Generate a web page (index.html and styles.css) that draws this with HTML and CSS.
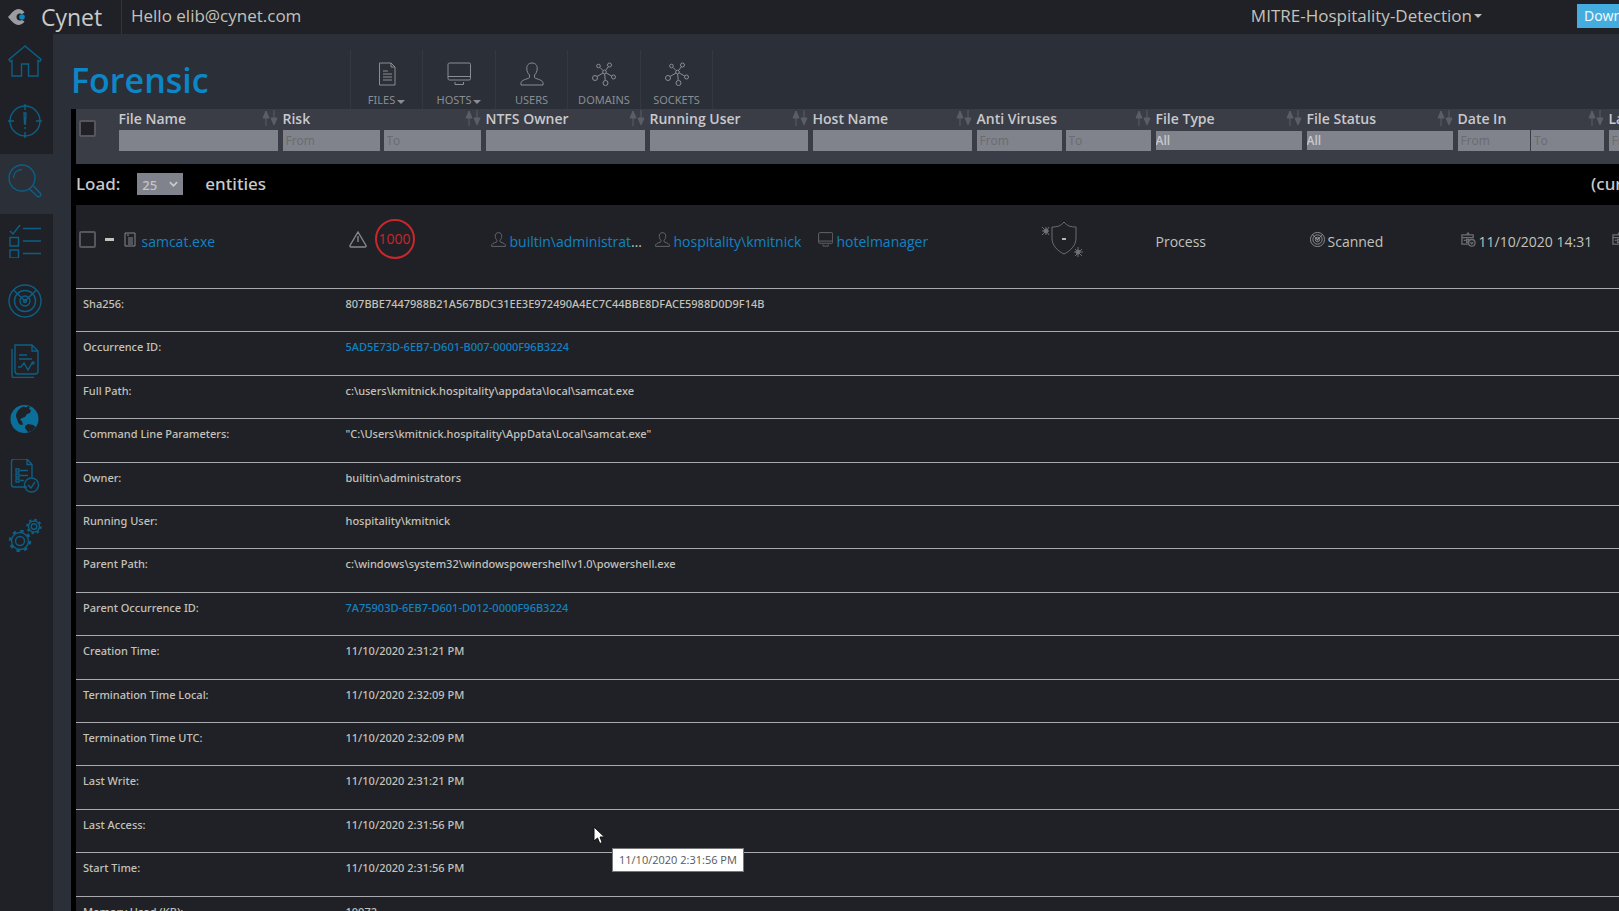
FILE: index.html
```html
<!DOCTYPE html>
<html lang="en">
<head>
<meta charset="utf-8">
<title>Cynet - Forensic</title>
<link rel="stylesheet" href="styles.css">
</head>
<body>
<svg class="defs" aria-hidden="true">
  <symbol id="i-sort" viewBox="0 0 16 16"><path d="M4 1v15M12 0v10" stroke="currentColor" fill="none"/><path d="M4 1 7 8H1zM12 15 9 8h6z" fill="currentColor"/></symbol>
  <symbol id="i-user" viewBox="0 0 24 24"><path d="M12 1C8.500 1 6.500 3.500 6.800 7c.2 2.500 1 4.500 2.700 6v2.500c-.4 1.500-7 1.500-8.500 5V23h22v-2.500c-1.500-3.500-8.100-3.500-8.500-5V13c1.700-1.500 2.500-3.500 2.700-6C17.500 3.500 15.500 1 12 1z"/></symbol>
  <symbol id="i-host" viewBox="0 0 24 24"><rect x="1" y="1" width="22.500" height="17" rx="1.500"/><path d="M1 14.500h22M8 20v2.500h8.500V20"/></symbol>
  <symbol id="i-net" viewBox="0 0 24 24"><circle cx="12.500" cy="10" r="1.800"/><circle cx="6.500" cy="4" r="1.800"/><circle cx="17.500" cy="3" r="2"/><circle cx="21.500" cy="15" r="2"/><circle cx="13.500" cy="21" r="2.500"/><circle cx="3" cy="16" r="2.500"/><path d="M11 8.500 8 5.500M13.500 8.500l3-4M14.200 11l5.500 3M12.700 12l.5 6.500M11 11l-6 3.500"/></symbol>
  <symbol id="i-radar" viewBox="0 0 34 34"><circle cx="17" cy="17" r="16"/><circle cx="17" cy="17" r="10.500"/><circle cx="17" cy="17" r="5"/><circle cx="17" cy="17" r="1.500"/><path d="M5.500 6 17 17 28.500 6"/></symbol>
  <symbol id="i-date" viewBox="0 0 16 16"><path d="M6 3 7.500 1 9 3"/><path d="M1 3h12v3H1zM1 6v7h7M3 9h2M6 8h2v3H6z" /><circle cx="11.500" cy="11.500" r="3.500"/><path d="m10 11 1.500 1.500L13 11"/></symbol>
</svg>
<div class="page">
  <header class="topbar">
    <a class="brand" href="#">
      <svg class="brand-mark" viewBox="0 0 18 16"><path d="M0 8C3 5 5 1 10 0c3 0 5 1.500 6.500 3.500L14 5C11 3.500 8.500 5 8.500 8s2.500 4.500 5.500 3l2.500 1.500C15 14.500 13 16 10 16 5 15 3 11 0 8z" fill="#9c9ca0"/><circle cx="14" cy="8" r="2.800" fill="#0a86c4"/></svg>
      <span class="brand-name">Cynet</span>
    </a>
    <span class="hello">Hello elib@cynet.com</span>
    <button class="tenant" type="button">MITRE-Hospitality-Detection<span class="caret"></span></button>
    <button class="download" type="button">Download</button>
  </header>
  <div class="body">
    <nav class="sidebar" aria-label="Main">
      <a href="#" aria-label="Home"><svg viewBox="0 0 34 34"><path d="M17 2 1 15.500l1.200 2L4 16.500V32h9.500V20h7v12H30V16.500l1.800 1 1.200-2z"/></svg></a>
      <a href="#" aria-label="Alerts"><svg viewBox="0 0 34 34"><circle cx="17" cy="17" r="15"/><path d="M17 0v6M17 28v6M0 17h6M28 17h6"/><path d="M16 9h2l-.6 11h-.8zM17 23v2"/></svg></a>
      <a href="#" aria-label="Forensic" class="active"><svg viewBox="0 0 34 34"><circle cx="14" cy="14" r="13"/><path d="M5.500 14c0-5 3.500-8.500 8.500-8.500M21.500 25l8 7.500c2 1 4-1 3-3L25 21.500"/></svg></a>
      <a href="#" aria-label="Tasks"><svg viewBox="0 0 34 34"><path d="m2 7 3 3 7-9M15 4.500h18M15 17h18M15 29.500h18M2 13.500h8.500V22H2zM2 26h8.500v8H2z"/></svg></a>
      <a href="#" aria-label="Radar"><svg><use href="#i-radar"/></svg></a>
      <a href="#" aria-label="Reports"><svg viewBox="0 0 34 34"><path d="M7 1h17l6 6v20c0 2-1 3-3 3H10c-2 0-3-1-3-3zM24 1v6h6M4 5v27c0 1 .5 1.500 1.500 1.500H26M11 11h8M11 15h13M10 23h3l3-4 4 7 4-7"/><circle cx="25" cy="19" r="1"/></svg></a>
      <a href="#" aria-label="Network" class="short"><svg viewBox="0 0 34 34"><circle cx="16.500" cy="17" r="14" fill="#0b6f9c" stroke="none"/><path d="M9 10c2-3 4-5 7-5.500l2 1 2-1.500 2 1-1 2 2 1-1 3-3 1-2 3-3 1-2 1.500 2 2 1 3-2 .5c-3-1-3-4-4-6-1-2-1.500-4 0-7zM17 24l3-2 5 1 3 2-4 4-4 1-3-4z" fill="#1f2126" stroke="none"/></svg></a>
      <a href="#" aria-label="Policies" class="short"><svg viewBox="0 0 34 34"><path d="M19 28H6c-1.500 0-2.500-1-2.500-2.500V3C3.500 1.500 4.500 0 6 0h13l5 5.500V18M19 0v5.500h5M8 10h3v3H8zM8 15h3v3H8zM8 20h3v3H8zM12 11.500h8M12 16.500h8M12 21.500h4"/><circle cx="23.500" cy="26" r="7"/><path d="m20 26 3 3 4-6"/></svg></a>
      <a href="#" aria-label="Settings"><svg viewBox="0 0 34 34"><circle cx="12" cy="23" r="4.500"/><circle cx="12" cy="23" r="8.500"/><circle cx="12" cy="23" r="10" stroke-width="2.500" stroke-dasharray="3.500 4.350"/><circle cx="26" cy="8.500" r="2.800"/><circle cx="26" cy="8.500" r="5.500"/><circle cx="26" cy="8.500" r="6.800" stroke-width="2" stroke-dasharray="2.500 2.840"/></svg></a>
    </nav>
    <main class="main">
      <div class="title-row">
        <h1>Forensic</h1>
        <div class="tools">
          <button type="button"><svg viewBox="0 0 24 24"><path d="M4.500 1H16l4 4v18H4.500zM16 1v4h4M8 9h5M8 12h9M8 15h9M8 18h9"/></svg><span>FILES<i class="caret"></i></span></button>
          <button type="button"><svg><use href="#i-host"/></svg><span>HOSTS<i class="caret"></i></span></button>
          <button type="button"><svg><use href="#i-user"/></svg><span>USERS</span></button>
          <button type="button"><svg><use href="#i-net"/></svg><span>DOMAINS</span></button>
          <button type="button"><svg><use href="#i-net"/></svg><span>SOCKETS</span></button>
        </div>
      </div>
      <table class="grid">
        <colgroup><col class="c-check"><col class="c-wide"><col class="c-risk"><col class="c-wide"><col class="c-std"><col class="c-wide"><col class="c-av"><col class="c-small"><col class="c-small"><col class="c-small"><col></colgroup>
        <thead>
          <tr>
            <th><input class="tick" type="checkbox" aria-label="Select all"></th>
            <th><div class="head"><label for="f-name">File Name</label><svg><use href="#i-sort"/></svg></div><div class="filters"><input id="f-name" type="text"></div></th>
            <th><div class="head"><label for="f-risk">Risk</label><svg><use href="#i-sort"/></svg></div><div class="filters"><input id="f-risk" type="text" placeholder="From"><input type="text" placeholder="To" aria-label="Risk to"></div></th>
            <th><div class="head"><label for="f-owner">NTFS Owner</label><svg><use href="#i-sort"/></svg></div><div class="filters"><input id="f-owner" type="text"></div></th>
            <th><div class="head"><label for="f-user">Running User</label><svg><use href="#i-sort"/></svg></div><div class="filters"><input id="f-user" type="text"></div></th>
            <th><div class="head"><label for="f-host">Host Name</label><svg><use href="#i-sort"/></svg></div><div class="filters"><input id="f-host" type="text"></div></th>
            <th><div class="head"><label for="f-av">Anti Viruses</label><svg><use href="#i-sort"/></svg></div><div class="filters"><input id="f-av" type="text" placeholder="From"><input type="text" placeholder="To" aria-label="Anti viruses to"></div></th>
            <th><div class="head"><label for="f-type">File Type</label><svg><use href="#i-sort"/></svg></div><div class="filters"><select id="f-type"><option>All</option></select></div></th>
            <th><div class="head"><label for="f-status">File Status</label><svg><use href="#i-sort"/></svg></div><div class="filters"><select id="f-status"><option>All</option></select></div></th>
            <th><div class="head"><label for="f-in">Date In</label><svg><use href="#i-sort"/></svg></div><div class="filters tight"><input id="f-in" type="text" placeholder="From"><input type="text" placeholder="To" aria-label="Date in to"></div></th>
            <th><div class="head"><label for="f-last">Last Seen</label><svg><use href="#i-sort"/></svg></div><div class="filters tight"><input id="f-last" type="text" placeholder="From"><input type="text" placeholder="To" aria-label="Last seen to"></div></th>
          </tr>
        </thead>
        <tbody>
          <tr class="load"><td colspan="11"><div class="load-bar"><label for="load">Load:</label><span class="pick"><select id="load"><option>25</option></select><svg viewBox="0 0 10 6"><path d="m1 1 4 4 4-4"/></svg></span><span>entities</span><span class="current">(currently 1 to 25)</span></div></td></tr>
          <tr class="item">
            <td><div class="cell select"><input class="tick" type="checkbox" aria-label="Select samcat.exe"><button class="fold" type="button" aria-label="Collapse"></button></div></td>
            <td><div class="cell inset"><svg class="file" viewBox="0 0 12 15"><path d="M1 1h10v13H1zM3 3h2M4 6h5M4 8h5M4 10h5M4 12h5"/></svg><a href="#">samcat.exe</a></div></td>
            <td><div class="cell center"><svg class="warn" viewBox="0 0 18 17"><path d="M9 1 17 14.500c.3 1-.2 1.500-1 1.500H2c-.8 0-1.300-.5-1-1.500zM9 5v6"/></svg><span class="score">1000</span></div></td>
            <td><div class="cell inset"><svg><use href="#i-user"/></svg><span class="clip"><a href="#">builtin\administrators</a></span></div></td>
            <td><div class="cell inset"><svg><use href="#i-user"/></svg><a href="#">hospitality\kmitnick</a></div></td>
            <td><div class="cell inset"><svg><use href="#i-host"/></svg><a href="#">hotelmanager</a></div></td>
            <td><div class="cell center"><svg class="shield" viewBox="0 0 44 40"><path d="M22 3c-3 4-7 5-12 5v11c0 8 6 13 12 16 6-3 12-8 12-16V8c-5 0-9-1-12-5z"/><path d="M20 20h4" class="dash"/><circle cx="4" cy="12" r="2" class="bug"/><circle cx="36" cy="33" r="2" class="bug"/><path d="m0 8 3 3M0 12h7M0 16l3-3M4 8v8M7 8l-2 3M7 16l-2-3M33 30l7 7M33 37l7-7M36 28v10M32 33h9"/></svg></div></td>
            <td><div class="cell"><span>Process</span></div></td>
            <td><div class="cell status"><svg class="scan"><use href="#i-radar"/></svg><span>Scanned</span></div></td>
            <td><div class="cell status"><svg><use href="#i-date"/></svg><span>11/10/2020 14:31</span></div></td>
            <td><div class="cell status"><svg><use href="#i-date"/></svg><span>11/10/2020 14:32</span></div></td>
          </tr>
        </tbody>
      </table>
      <table class="details">
        <tbody>
          <tr><th scope="row">Sha256:</th><td>807BBE7447988B21A567BDC31EE3E972490A4EC7C44BBE8DFACE5988D0D9F14B</td></tr>
          <tr><th scope="row">Occurrence ID:</th><td><a href="#">5AD5E73D-6EB7-D601-B007-0000F96B3224</a></td></tr>
          <tr><th scope="row">Full Path:</th><td>c:\users\kmitnick.hospitality\appdata\local\samcat.exe</td></tr>
          <tr><th scope="row">Command Line Parameters:</th><td>"C:\Users\kmitnick.hospitality\AppData\Local\samcat.exe"</td></tr>
          <tr><th scope="row">Owner:</th><td>builtin\administrators</td></tr>
          <tr><th scope="row">Running User:</th><td>hospitality\kmitnick</td></tr>
          <tr><th scope="row">Parent Path:</th><td>c:\windows\system32\windowspowershell\v1.0\powershell.exe</td></tr>
          <tr><th scope="row">Parent Occurrence ID:</th><td><a href="#">7A75903D-6EB7-D601-D012-0000F96B3224</a></td></tr>
          <tr><th scope="row">Creation Time:</th><td>11/10/2020 2:31:21 PM</td></tr>
          <tr><th scope="row">Termination Time Local:</th><td>11/10/2020 2:32:09 PM</td></tr>
          <tr><th scope="row">Termination Time UTC:</th><td>11/10/2020 2:32:09 PM</td></tr>
          <tr><th scope="row">Last Write:</th><td>11/10/2020 2:31:21 PM</td></tr>
          <tr><th scope="row">Last Access:</th><td>11/10/2020 2:31:56 PM</td></tr>
          <tr><th scope="row">Start Time:</th><td>11/10/2020 2:31:56 PM</td></tr>
          <tr><th scope="row">Memory Used (KB):</th><td>10072</td></tr>
        </tbody>
      </table>
    </main>
  </div>
</div>
<svg class="cursor" viewBox="0 0 12 19" aria-hidden="true"><path d="M1 1v14l3.500-3 2.300 5.500 2.400-1L7 11h4.500z"/></svg>
<div class="tooltip" role="tooltip">11/10/2020 2:31:56 PM</div>
</body>
</html>
```

FILE: styles.css
```css
* { box-sizing: border-box; }
html, body { height: 100%; }
body {
  margin: 0;
  overflow: hidden;
  position: relative;
  background: #2b2f37;
  color: #c4c2bb;
  font-family: "Noto Sans", "Open Sans", sans-serif;
  font-size: 14px;
}
button, input, select { font: inherit; color: inherit; border: 0; border-radius: 0; margin: 0; padding: 0; background: none; }
a { color: #1482c1; text-decoration: none; }
svg { display: block; flex: none; fill: none; stroke: currentColor; }
.defs { display: none; }
.page { min-width: 1760px; min-height: 100%; display: flex; flex-direction: column; }

.topbar { display: flex; align-items: center; height: 34px; background: #1f2126; }
.brand { display: flex; align-items: center; gap: 15px; width: 122px; height: 34px; padding-left: 8px; border-right: 1px solid #33363c; }
.brand-mark { width: 18px; height: 16px; stroke: none; }
.brand-name { font-family: "Open Sans", sans-serif; font-size: 23px; line-height: 32px; font-weight: 500; color: #c9cacc; }
.hello { padding-left: 9px; font-size: 17px; line-height: 30px; padding-bottom: 2px; font-family: "Open Sans", sans-serif; }
.tenant { display: flex; align-items: center; margin-left: auto; margin-right: 95px; font-size: 17px; line-height: 30px; padding-bottom: 3px; font-family: "Open Sans", sans-serif; }
.download { width: 183px; height: 24px; margin-bottom: 3px; padding-left: 7px; background: #45acdf; color: #f2f8fc; text-align: left; line-height: 22px; }
.caret { display: inline-block; margin-left: 2px; border: 4px solid transparent; border-top-color: currentColor; border-bottom: 0; }

.body { flex: 1; display: flex; }
.sidebar { width: 53px; flex: none; background: #1f2126; color: #0d5f85; }
.sidebar a { display: flex; justify-content: center; height: 60px; padding-top: 10px; padding-right: 3px; color: inherit; }
.sidebar a.short { height: 57px; padding-top: 8px; }
.sidebar a.active { background: #2b2f37; }
.sidebar svg { width: 34px; height: 34px; stroke-width: 1.4; }

.main { flex: 1; min-width: 0; padding-left: 18px; }
.title-row { display: flex; height: 75px; }
h1 { width: 279px; margin: 0; padding-top: 22px; font-family: "Open Sans", sans-serif; font-size: 34px; line-height: 48px; font-weight: 600; color: #0c86c6; }
.tools { display: flex; margin-top: 16px; border-left: 1px solid #343840; color: #8a8d93; }
.tools button { display: flex; flex-direction: column; align-items: center; width: 72px; padding-top: 12px; gap: 6px; border-right: 1px solid #343840; font-size: 11px; line-height: 16px; }
.tools button:nth-child(even) { width: 73px; }
.tools svg { width: 24px; height: 24px; }

.grid, .details { width: 100%; border-collapse: collapse; border-left: 5px solid #000; background: #1f2126; table-layout: fixed; }
.grid { font-family: "Open Sans", sans-serif; }
.grid td, .grid th { padding: 0; text-align: left; vertical-align: top; }
.grid thead { background: #3a3d46; }
.grid thead th { height: 55px; padding-right: 5px; font-weight: 600; color: #c8c9cd; }
.c-check { width: 45px; }
.c-std { width: 163px; }
.c-wide { width: 164px; }
.c-risk { width: 203px; }
.c-av { width: 179px; }
.c-small { width: 151px; }
.head { display: flex; justify-content: space-between; height: 21px; line-height: 20px; }
.head svg { width: 16px; height: 16px; margin-top: 1px; color: #5b5e67; }
.filters { display: flex; gap: 4px; height: 21px; }
.filters.tight { gap: 1px; }
.filters input { flex: 1; width: 0; padding-left: 3px; background: #80838b; font-size: 12px; font-weight: 500; }
.filters input::placeholder { color: #696b70; opacity: 1; }
.filters select { appearance: none; flex: 1; height: 19px; margin-top: 1px; background: #80838b; color: #c8c9cd; font-size: 12px; font-weight: 600; }
.tick { appearance: none; display: block; flex: none; width: 17px; height: 17px; border: 2px solid #55575c; border-radius: 2px; background: #1f2126; }
th .tick { margin: 11px 0 0 3px; }

.load { background: #000; }
.load-bar { display: flex; align-items: center; height: 41px; font-family: "Noto Sans", sans-serif; font-size: 17px; line-height: 24px; padding-bottom: 1px; font-weight: 500; color: #c9c9c9; }
.pick { position: relative; margin: 0 22px 0 17px; }
.pick select { appearance: none; display: block; width: 46px; height: 22px; padding-left: 5px; background: #80838b; color: #c4c5c9; font-size: 13px; }
.pick svg { position: absolute; right: 5px; top: 8px; width: 9px; height: 6px; stroke-width: 2; pointer-events: none; }
.current { margin-left: auto; width: 169px; white-space: nowrap; }

.item { font-weight: 500; white-space: nowrap; }
.cell { display: flex; align-items: center; gap: 4px; height: 83px; padding: 0 5px 15px 0; }
.cell svg { width: 15px; height: 15px; color: #6b6d72; stroke-width: 1.4; }
.cell a, .cell > span:not(.score) { padding-top: 4px; }
.cell .clip a { padding: 0; }
.cell.inset { padding-left: 5px; }
.cell.inset:has(.clip) { padding-right: 3px; }
.cell.center { justify-content: center; gap: 8px; }
.cell.select { padding-left: 3px; gap: 9px; }
.cell.status { padding-left: 3px; gap: 3px; }
.cell .file { width: 12px; height: 15px; color: #85878b; margin-right: 2px; stroke-width: 1; }
.cell .warn { width: 18px; height: 17px; color: #85878b; }
.cell .scan { color: #96989c; stroke-width: 2; }
.cell .shield { width: 44px; height: 40px; stroke-width: 1; }
.shield .dash { stroke: #b5b5ab; stroke-width: 2; }
.shield .bug { fill: #85878b; }
.fold { width: 9px; height: 3px; background: #c4c2bb; }
.clip { overflow: hidden; text-overflow: ellipsis; }
.score { width: 40px; height: 40px; border: 2px solid #c8272d; border-radius: 50%; color: #c8272d; font-weight: 400; line-height: 35px; text-align: center; }

.details { font-size: 11px; line-height: 16px; }
.details tr { height: 43px; border-top: 1px solid #a9aaad; }
.details tr:nth-child(5n+2), .details tr:nth-child(5n+4) { height: 44px; }
.details th, .details td { padding: 7px 0 0 7px; text-align: left; vertical-align: top; font-weight: 500; }
.details th { width: 265px; }

.cursor { position: absolute; left: 593px; top: 826px; width: 12px; height: 19px; fill: #fff; stroke: #111; }
.tooltip { position: absolute; left: 612px; top: 848px; padding: 2px 6px; border: 1px solid #77787a; background: #fff; color: #575757; font-family: "Open Sans", sans-serif; font-size: 11px; line-height: 18px; white-space: nowrap; }
```
